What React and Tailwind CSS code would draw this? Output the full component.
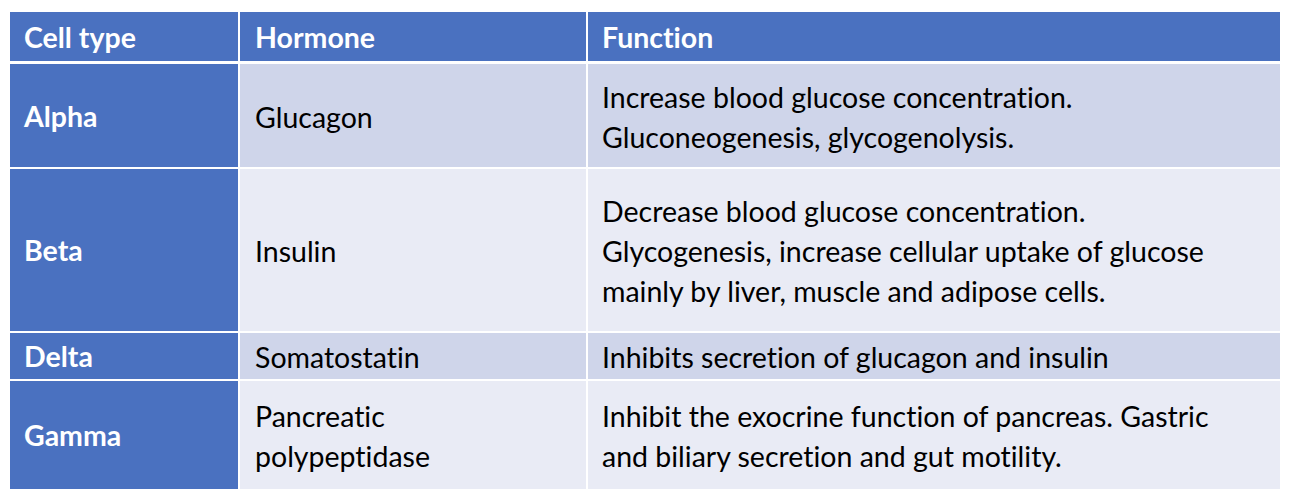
import React from 'react';

const ROWS = [
  { cell: 'Alpha', hormone: ['Glucagon'], fn: ['Increase blood glucose concentration.', 'Gluconeogenesis, glycogenolysis.'], h: 'h-[103px]', bg: 'bg-[#cfd5ea]' },
  { cell: 'Beta', hormone: ['Insulin'], fn: ['Decrease blood glucose concentration.', 'Glycogenesis, increase cellular uptake of glucose', 'mainly by liver, muscle and adipose cells.'], h: 'h-[162px]', bg: 'bg-[#e9ebf5]' },
  { cell: 'Delta', hormone: ['Somatostatin'], fn: ['Inhibits secretion of glucagon and insulin'], h: 'h-[46px]', bg: 'bg-[#cfd5ea]' },
  { cell: 'Gamma', hormone: ['Pancreatic', 'polypeptidase'], fn: ['Inhibit the exocrine function of pancreas. Gastric', 'and biliary secretion and gut motility.'], h: 'h-[108px]', bg: 'bg-[#e9ebf5]' },
];

function Lines({ lines }) {
  return lines.map((l, i) => <div key={i} className="whitespace-nowrap">{l}</div>);
}

export default function App() {
  return (
    <div className="w-[1289px] h-[499px] bg-white pt-[12px] pl-[10px] text-[28.5px] leading-[40px] [font-variant-ligatures:none]" style={{ fontFamily: 'Lato, "Open Sans", sans-serif' }}>
      <div className="w-[1270px] flex flex-col gap-[2px]">
        {/* header */}
        <div className="grid grid-cols-[228px_346px_692px] gap-[2px] h-[49px] mb-[1px] text-white font-bold">
          <div className="bg-[#4a71c0] flex items-center pl-[14px]">Cell type</div>
          <div className="bg-[#4a71c0] flex items-center pl-[15px]">Hormone</div>
          <div className="bg-[#4a71c0] flex items-center pl-[14px]">Function</div>
        </div>
        {ROWS.map((r) => (
          <div key={r.cell} className={`grid grid-cols-[228px_346px_692px] gap-[2px] ${r.h}`}>
            <div className="bg-[#4a71c0] text-white font-bold flex items-center pl-[14px]">{r.cell}</div>
            <div className={`${r.bg} text-black flex flex-col justify-center pl-[15px] pt-[2px]`}>
              <Lines lines={r.hormone} />
            </div>
            <div className={`${r.bg} text-black flex flex-col justify-center pl-[14px] pt-[2px]`}>
              <Lines lines={r.fn} />
            </div>
          </div>
        ))}
      </div>
    </div>
  );
}
